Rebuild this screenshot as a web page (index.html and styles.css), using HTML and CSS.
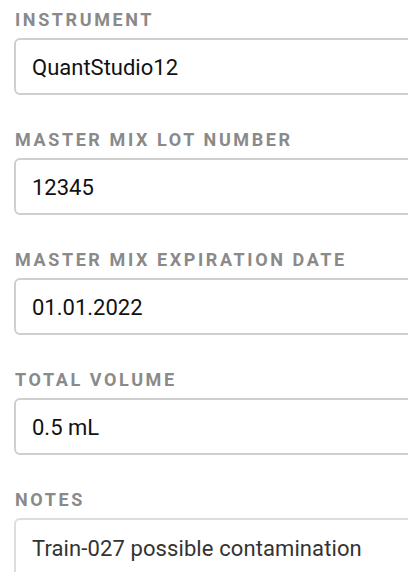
FILE: index.html
```html
<!DOCTYPE html>
<html>
<head>
<meta charset="utf-8">
<link rel="stylesheet" href="styles.css">
</head>
<body>
<form class="form">
  <div class="field">
    <label class="label">Instrument</label>
    <div class="input">QuantStudio12</div>
  </div>
  <div class="field">
    <label class="label">Master Mix Lot Number</label>
    <div class="input">12345</div>
  </div>
  <div class="field">
    <label class="label">Master Mix Expiration Date</label>
    <div class="input">01.01.2022</div>
  </div>
  <div class="field">
    <label class="label">Total Volume</label>
    <div class="input">0.5 mL</div>
  </div>
  <div class="field">
    <label class="label">Notes</label>
    <div class="input textarea">Train-027 possible contamination</div>
  </div>
</form>
</body>
</html>
```
FILE: styles.css
```css
html, body {
  margin: 0;
  padding: 0;
  background: #ffffff;
  overflow: hidden;
  width: 408px;
  height: 572px;
}
.form {
  display: flex;
  flex-direction: column;
  gap: 34px;
  padding: 9px 0 0 14px;
  width: 460px;
  font-family: Roboto, "Liberation Sans", sans-serif;
}
.field {
  display: flex;
  flex-direction: column;
}
.label {
  font-size: 18px;
  line-height: 21px;
  font-weight: 700;
  letter-spacing: 2.6px;
  text-transform: uppercase;
  color: #8a8a8a;
  padding-left: 1px;
  margin-bottom: 8px;
}
.input {
  box-sizing: border-box;
  height: 57px;
  border: 2px solid #cfcfcf;
  border-radius: 6px;
  padding: 15px 16px 0 16px;
  font-size: 22px;
  line-height: 26px;
  color: #111111;
}
.textarea {
  height: 90px;
  padding-top: 16px;
  color: #333333;
  border-color: #dddddd;
  letter-spacing: 0.1px;
}
```
